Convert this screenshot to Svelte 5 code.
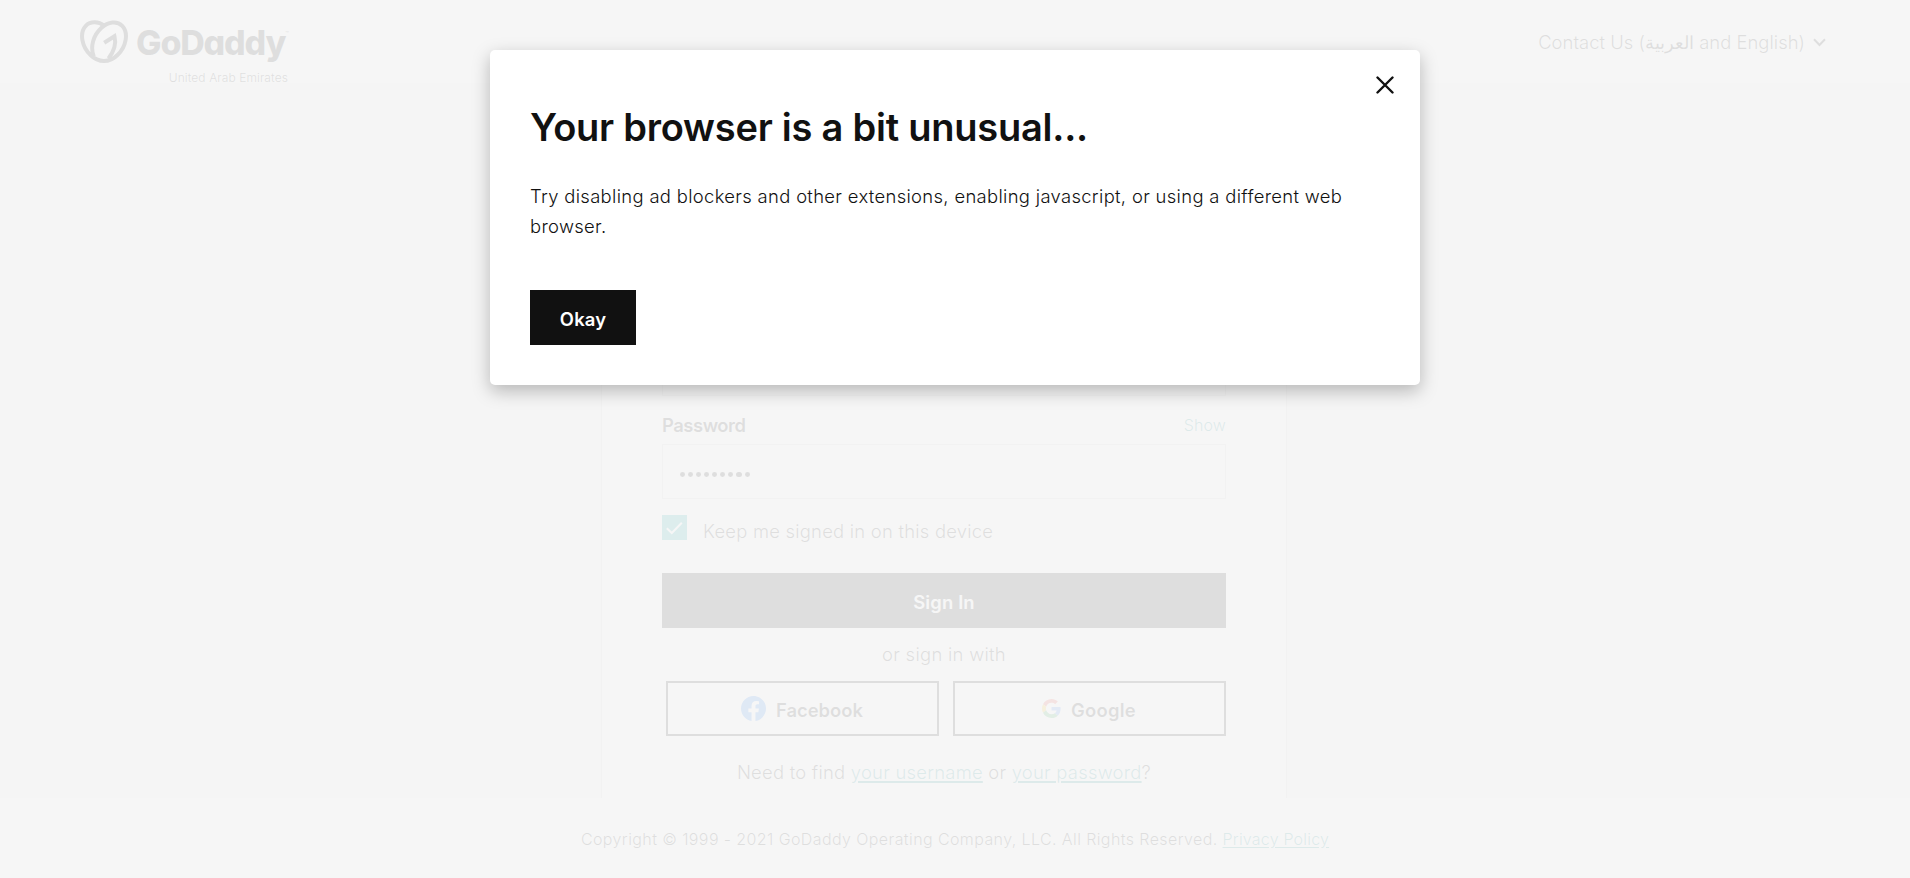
<script>
  const dots = Array.from({ length: 9 });
</script>

<div class="page">
  <header>
    <div class="brand">
      <div class="logo">
        <svg class="heart" width="48" height="44" viewBox="0 0 48 44" fill="none" stroke="#111" stroke-width="4">
          <path d="M24 5.600C19 1.600 10.500 .8 5.800 5.800C-1 13 2 27 10.500 35C15 39.500 19.500 41 24 41C28.500 41 33 39.500 37.500 35C46 27 49 13 42.200 5.800C37 .3 28 1.800 21.500 7.800C13 15.500 10 27 13.800 36.500" />
          <path d="M24.200 22.800L34.500 16.200C36 22 34.500 30.500 28.500 38.500" />
        </svg>
        <span class="word">GoDaddy</span><span class="tm">™</span>
      </div>
      <div class="region">United Arab Emirates</div>
    </div>
    <div class="contact">
      <span>Contact Us (العربية and English)</span>
      <svg width="13" height="9" viewBox="0 0 13 9" fill="none" stroke="#111" stroke-width="2"><path d="M1 1.300L6.500 7L12 1.300" /></svg>
    </div>
  </header>

  <main>
    <section class="card">
      <div class="field first"></div>
      <div class="labels"><label for="pw">Password</label><span class="show">Show</span></div>
      <div class="field" id="pw">{#each dots as _}<i></i>{/each}</div>
      <div class="keep">
        <svg width="25" height="25" viewBox="0 0 25 25"><rect width="25" height="25" fill="#00a4a6" /><path d="M4.800 13.200L9.800 18L19.800 7.800" fill="none" stroke="#fff" stroke-width="2" /></svg>
        <span>Keep me signed in on this device</span>
      </div>
      <button class="signin">Sign In</button>
      <p class="or">or sign in with</p>
      <div class="social">
        <button>
          <svg class="fb" width="25" height="25" viewBox="0 0 24 24"><path fill="#1877f2" d="M24 12.070C24 5.400 18.630 0 12 0S0 5.400 0 12.070C0 18.100 4.390 23.100 10.130 24v-8.440H7.080v-3.490h3.050V9.410c0-3.020 1.790-4.690 4.530-4.690 1.310 0 2.680.24 2.680.24v2.970h-1.510c-1.490 0-1.960.93-1.960 1.890v2.250h3.330l-.53 3.490h-2.800V24C19.610 23.100 24 18.100 24 12.070z" /></svg>
          <span>Facebook</span>
        </button>
        <button>
          <svg width="19" height="19" viewBox="0 0 48 48"><path fill="#ea4335" d="M24 9.500c3.540 0 6.710 1.220 9.210 3.600l6.850-6.850C35.900 2.380 30.470 0 24 0 14.620 0 6.510 5.380 2.560 13.220l7.980 6.190C12.430 13.720 17.740 9.500 24 9.500z" /><path fill="#4285f4" d="M46.980 24.550c0-1.570-.15-3.090-.38-4.550H24v9.020h12.940c-.58 2.960-2.260 5.480-4.780 7.180l7.730 6c4.510-4.180 7.090-10.360 7.090-17.650z" /><path fill="#fbbc05" d="M10.530 28.590c-.48-1.450-.76-2.990-.76-4.590s.27-3.140.76-4.590l-7.980-6.190C.92 16.460 0 20.120 0 24c0 3.880.92 7.540 2.560 10.780l7.970-6.190z" /><path fill="#34a853" d="M24 48c6.480 0 11.930-2.130 15.890-5.810l-7.730-6c-2.150 1.450-4.920 2.300-8.160 2.300-6.260 0-11.570-4.220-13.470-9.910l-7.980 6.190C6.510 42.620 14.620 48 24 48z" /></svg>
          <span class="gt">Google</span>
        </button>
      </div>
      <p class="find">Need to find <a href="#u">your username</a> or <a href="#p">your password</a>?</p>
    </section>
  </main>

  <footer>Copyright © 1999 - 2021 GoDaddy Operating Company, LLC. All Rights Reserved. <a href="#privacy">Privacy Policy</a></footer>
</div>

<div class="overlay">
  <div class="modal" role="dialog" aria-labelledby="title">
    <button class="close" aria-label="Close">
      <svg width="18" height="18" viewBox="0 0 18 18" fill="none" stroke="#111" stroke-width="2.400" stroke-linecap="round"><path d="M1.500 1.500L16.500 16.500M16.500 1.500L1.500 16.500" /></svg>
    </button>
    <h1 id="title">Your browser is a bit unusual...</h1>
    <p>Try disabling ad blockers and other extensions, enabling javascript, or using a different web browser.</p>
    <button class="okay">Okay</button>
  </div>
</div>

<style>
  :global(body) { margin: 0; overflow: hidden; }
  .page, .overlay {
    box-sizing: border-box;
    width: 100%;
    height: 878px;
    font-family: Inter, 'Liberation Sans', sans-serif;
    font-size: 18.4px;
    font-weight: 300;
    color: #111;
  }
  button { font: inherit; font-weight: 600; margin: 0; padding: 0; border: 0; border-radius: 0; color: #111; }
  p, h1 { margin: 0; }
  a { color: #098287; text-underline-offset: 2px; }

  .page { display: flex; flex-direction: column; background: #f2f2f2; overflow: hidden; }

  header {
    box-sizing: border-box;
    flex: none;
    height: 83px;
    padding: 20px 84px 0 80px;
    display: flex;
    justify-content: space-between;
    background: #fff;
  }
  .brand { width: 208px; }
  .logo { display: flex; height: 44px; }
  .heart { flex: none; }
  .word { margin-left: 8px; font-weight: 800; font-size: 34px; line-height: 46px; letter-spacing: -1.200px; font-feature-settings: 'cv11'; }
  .tm { font-size: 6px; line-height: 24px; margin-top: 2px; }
  .region { font-size: 12px; line-height: 16px; margin-top: 5.500px; text-align: right; letter-spacing: .1px; }
  .contact { display: flex; gap: 8px; height: 44px; align-items: center; }
  .contact span { line-height: 44px; letter-spacing: .04px; }

  main { flex: none; height: 715px; display: flex; justify-content: center; }
  .card {
    box-sizing: border-box;
    width: 686px;
    margin-left: -22px;
    padding: 258px 60px 0;
    background: #fff;
    border: solid #d0d0d0;
    border-width: 0 1px;
  }
  .field {
    box-sizing: border-box;
    height: 55px;
    padding: 5px 0 0 17px;
    display: flex;
    align-items: center;
    gap: 3px;
    border: 1px solid #d4d4d4;
  }
  .field i { width: 5.070px; height: 5px; border-radius: 50%; background: #111; }
  .labels { display: flex; justify-content: space-between; height: 48px; align-items: flex-end; box-sizing: border-box; }
  .labels label { font-weight: 600; line-height: 37px; letter-spacing: -.45px; }
  .show { font-size: 16px; line-height: 37px; letter-spacing: .15px; color: #098287; }
  .keep { display: flex; gap: 16px; margin-top: 16px; height: 25px; letter-spacing: .24px; }
  .keep span { line-height: 32px; }
  .signin { display: block; width: 100%; height: 55px; margin-top: 33px; padding-top: 3px; background: #111; color: #fff; letter-spacing: .15px; }
  .or { margin-top: 11px; text-align: center; line-height: 30px; letter-spacing: .3px; }
  .social { display: flex; gap: 14px; margin: 12px 0 0 4px; }
  .social button {
    box-sizing: border-box;
    flex: 1;
    height: 55px;
    display: flex;
    align-items: center;
    justify-content: center;
    gap: 10px;
    background: none;
    border: 2px solid #111;
  }
  .social svg { flex: none; margin-left: -1px; }
  .social span { line-height: 30px; margin-top: 2px; }
  .gt { letter-spacing: .25px; }
  .find { margin-top: 21px; line-height: 30px; text-align: center; letter-spacing: .25px; }
  .find a { text-decoration-thickness: 2px; }

  footer { flex: 1; background: #fff; text-align: center; font-size: 16px; line-height: 24px; padding-top: 29px; letter-spacing: .4px; }
  footer a { letter-spacing: .2px; }

  .overlay { position: absolute; inset: 0; display: flex; justify-content: center; align-items: flex-start; padding-top: 50px; background: rgba(245, 245, 245, .9); }
  .modal {
    position: relative;
    box-sizing: border-box;
    width: 930px;
    height: 335px;
    padding: 52px 40px 40px;
    background: #fff;
    border-radius: 5px;
    box-shadow: 0 6px 18px rgba(0, 0, 0, .26);
  }
  .close { position: absolute; top: 26px; right: 26px; width: 18px; height: 18px; background: none; }
  .close svg { display: block; }
  h1 { font-size: 38px; font-weight: 600; line-height: 50px; letter-spacing: -.23px; }
  .modal p { margin-top: 29px; line-height: 30px; letter-spacing: .34px; }
  .okay { display: block; width: 106px; height: 55px; margin-top: 49px; padding-top: 3px; background: #111; color: #fff; letter-spacing: .15px; }
</style>
